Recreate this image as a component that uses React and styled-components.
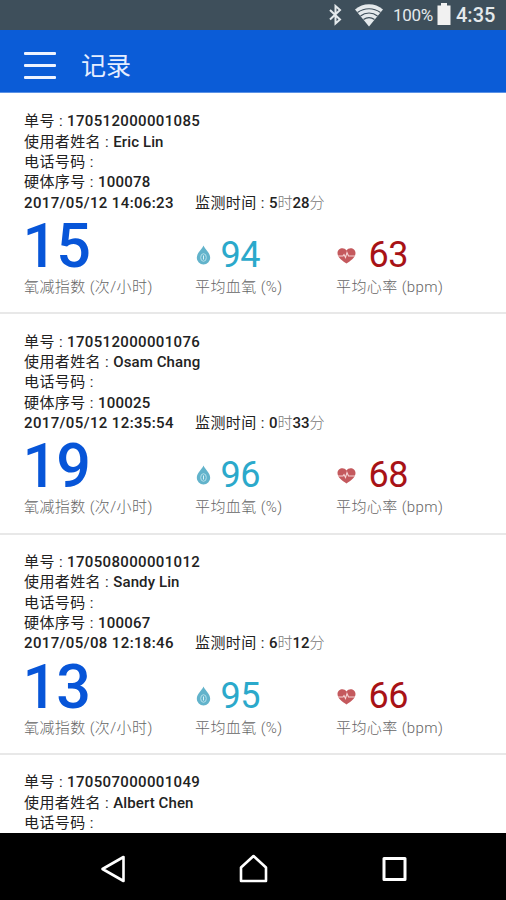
import styled, { createGlobalStyle } from 'styled-components';

const GlobalStyle = createGlobalStyle`
  * {
    box-sizing: border-box;
  }
  body {
    margin: 0;
    background: #ffffff;
    font-family: Roboto, 'Noto Sans CJK SC', sans-serif;
  }
`;

const Screen = styled.div`
  display: flex;
  flex-direction: column;
  width: 506px;
  height: 900px;
  overflow: hidden;
  background: #ffffff;
`;

const StatusBar = styled.div`
  display: flex;
  flex: none;
  align-items: center;
  justify-content: flex-end;
  height: 30px;
  padding-right: 11px;
  background: #3e4f5b;
  color: #e4e9ec;

  .bluetooth {
    margin-right: 12px;
  }
  .wifi {
    margin-right: 10px;
  }
  .battery {
    margin: 0 5px 3px 3px;
  }
`;

const BatteryText = styled.span`
  width: 41px;
  font-size: 17px;
  letter-spacing: -0.3px;
  white-space: nowrap;
`;

const Clock = styled.span`
  width: 39px;
  font-size: 20px;
  font-weight: 500;
  white-space: nowrap;
`;

const Header = styled.header`
  display: flex;
  flex: none;
  align-items: center;
  height: 63px;
  padding: 8px 24px 0;
  background: #0b5cd7;
  border-bottom: 1px solid #5b92e6;
`;

const MenuButton = styled.button`
  display: flex;
  flex-direction: column;
  gap: 9px;
  width: 32px;
  margin-right: 25px;
  padding: 0;
  background: none;
  border: none;
  cursor: pointer;

  span {
    width: 32px;
    height: 3px;
    border-radius: 1px;
    background: #eef3ff;
  }
`;

const Title = styled.h1`
  margin: 4px 0 0;
  font-size: 25px;
  line-height: 36px;
  font-weight: 400;
  color: #e6eeff;
`;

const RecordList = styled.main`
  flex: 1;
  min-height: 0;
  padding-top: 1px;
  overflow: hidden;
`;

const Record = styled.section`
  height: ${(props) => (props.$partial ? 'auto' : '220.35px')};
  padding: 17.2px 0 0 24px;
  border-bottom: ${(props) => (props.$partial ? 'none' : '2px solid #e8e8e8')};
`;

const Line = styled.div`
  display: flex;
  height: 20.35px;
  line-height: 20.35px;
  font-size: 15px;
  font-weight: 500;
  color: #222222;
  white-space: pre;
`;

const Label = styled.span`
  font-weight: 400;
  letter-spacing: 0.4px;
  color: #222222;
`;

const Value = styled.span`
  letter-spacing: ${(props) => props.$spacing || 0}px;
`;

const DateText = styled.span`
  width: 171px;
  letter-spacing: 0.38px;
`;

const Unit = styled.span`
  font-weight: 300;
  color: #777777;
`;

const Stats = styled.div`
  display: grid;
  grid-template-columns: 171px 141px 1fr;
`;

const Reading = styled.div`
  display: flex;
  align-items: flex-end;
  height: 64px;
  color: ${(props) => props.$color};
`;

const BigNumber = styled.span`
  margin-left: -1.5px;
  font-size: 61px;
  line-height: 62px;
  font-weight: 500;
  letter-spacing: -1px;
`;

const SmallNumber = styled.span`
  margin-left: ${(props) => props.$gap}px;
  font-size: 36px;
  line-height: 43px;
  font-weight: 400;
  letter-spacing: -0.4px;
`;

const Caption = styled.div`
  height: 20px;
  line-height: 20px;
  font-size: 15px;
  font-weight: 300;
  letter-spacing: 0.4px;
  color: #666666;
  white-space: nowrap;
`;

const NavBar = styled.nav`
  display: flex;
  flex: none;
  align-items: center;
  justify-content: space-between;
  height: 67px;
  padding: 4px 98px 0 99px;
  background: #000000;
`;

const records = [
  { id: '170512000001085', name: 'Eric Lin', serial: '100078', date: '2017/05/12 14:06:23', hours: '5', minutes: '28', odi: 15, oxygen: 94, pulse: 63 },
  { id: '170512000001076', name: 'Osam Chang', serial: '100025', date: '2017/05/12 12:35:54', hours: '0', minutes: '33', odi: 19, oxygen: 96, pulse: 68 },
  { id: '170508000001012', name: 'Sandy Lin', serial: '100067', date: '2017/05/08 12:18:46', hours: '6', minutes: '12', odi: 13, oxygen: 95, pulse: 66 },
  { id: '170507000001049', name: 'Albert Chen' },
];

const DropIcon = () => (
  <svg width="17" height="46" viewBox="0 0 17 46">
    <path d="M8.500 14.500C7 18.500 1.800 21.500 1.800 27a6.700 6.500 0 0 0 13.400 0C15.200 21.500 10 18.500 8.500 14.500Z" fill="#62b3cb" />
    <ellipse cx="8.500" cy="26.500" rx="2.800" ry="3.800" fill="none" stroke="#b5e0eb" strokeWidth="1" />
    <path d="M8.500 24.500v4" stroke="#d7f1f7" strokeWidth="1" />
  </svg>
);

const HeartIcon = () => (
  <svg width="20" height="46" viewBox="0 0 20 46">
    <path d="M10.500 32.500C6 29.500 1.500 26.500 1.500 22c0-5 6.500-6.500 9-2.500 2.500-4 9-2.500 9 2.500 0 4.500-4.500 7.500-9 10.500Z" fill="#c4595d" />
    <path d="M2 25h5l1-1.500 1.500 3 1.500-5 1.500 3.500h6.500" fill="none" stroke="#f6d5d5" strokeWidth="1.100" />
  </svg>
);

function RecordDetails({ record }) {
  return (
    <>
      <Line>
        <Label>硬体序号 : </Label>
        <Value $spacing={0.25}>{record.serial}</Value>
      </Line>
      <Line>
        <DateText>{record.date}</DateText>
        <Label>监测时间 : </Label>
        <Value>{record.hours}</Value>
        <Unit>时</Unit>
        <Value>{record.minutes}</Value>
        <Unit>分</Unit>
      </Line>
      <Stats>
        <div>
          <Reading $color="#0755d8">
            <BigNumber>{record.odi}</BigNumber>
          </Reading>
          <Caption>氧减指数 (次/小时)</Caption>
        </div>
        <div>
          <Reading $color="#2ba9cb">
            <DropIcon />
            <SmallNumber $gap={8.5}>{record.oxygen}</SmallNumber>
          </Reading>
          <Caption>平均血氧 (%)</Caption>
        </div>
        <div>
          <Reading $color="#a81216">
            <HeartIcon />
            <SmallNumber $gap={12.5}>{record.pulse}</SmallNumber>
          </Reading>
          <Caption>平均心率 (bpm)</Caption>
        </div>
      </Stats>
    </>
  );
}

function RecordItem({ record }) {
  return (
    <Record $partial={!record.serial}>
      <Line>
        <Label>单号 : </Label>
        <Value $spacing={0.35}>{record.id}</Value>
      </Line>
      <Line>
        <Label>使用者姓名 : </Label>
        <Value $spacing={0.1}>{record.name}</Value>
      </Line>
      <Line>
        <Label>电话号码 : </Label>
      </Line>
      {record.serial && <RecordDetails record={record} />}
    </Record>
  );
}

export default function App() {
  return (
    <Screen>
      <GlobalStyle />
      <StatusBar>
        <svg className="bluetooth" width="16" height="22" viewBox="0 0 16 22" fill="none" stroke="currentColor" strokeWidth="2">
          <path d="M3 6l10 9.500-4.500 4V2L13 6 3 15.500" />
        </svg>
        <svg className="wifi" width="28" height="24" viewBox="0 0 28 24">
          <path d="M0 6.500C8-.5 20-.5 28 6.500L14 23.500Z" fill="currentColor" />
          <path d="M2.500 9.500c7-5 16-5 23 0M5.500 13c5-4 12-4 17 0M8.500 16.500c3.500-2.500 7.500-2.500 11 0" fill="none" stroke="#3e4f5b" strokeWidth="1.200" />
        </svg>
        <BatteryText>100%</BatteryText>
        <svg className="battery" width="14" height="22" viewBox="0 0 14 22">
          <path d="M4 0h6v2.500h3.500V22H.5V2.500H4Z" fill="#f1f1f1" />
        </svg>
        <Clock>4:35</Clock>
      </StatusBar>
      <Header>
        <MenuButton aria-label="menu">
          <span />
          <span />
          <span />
        </MenuButton>
        <Title>记录</Title>
      </Header>
      <RecordList>
        {records.map((record) => (
          <RecordItem key={record.id} record={record} />
        ))}
      </RecordList>
      <NavBar>
        <svg width="28" height="30" viewBox="0 0 28 30" fill="none" stroke="#fff" strokeWidth="2.600" strokeLinejoin="round">
          <path d="M3.500 15 24.500 3v24Z" />
        </svg>
        <svg width="30" height="30" viewBox="0 0 30 30" fill="none" stroke="#fff" strokeWidth="2.600" strokeLinejoin="round">
          <path d="M14.500 2 27 13.500V27H2V13.500Z" />
        </svg>
        <svg width="28" height="30" viewBox="0 0 28 30" fill="none" stroke="#fff" strokeWidth="3" strokeLinejoin="round">
          <path d="M4 4.500h21v21H4Z" />
        </svg>
      </NavBar>
    </Screen>
  );
}
